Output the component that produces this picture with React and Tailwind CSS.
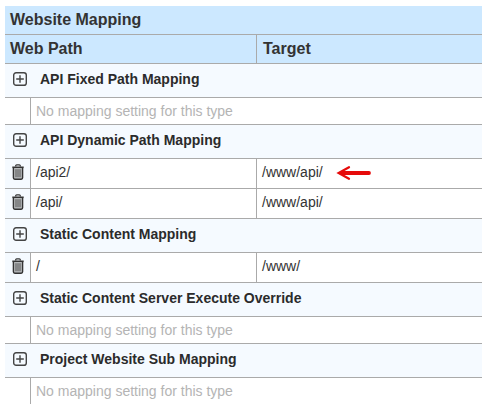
const groups = [
  { title: 'API Fixed Path Mapping', rows: [] },
  {
    title: 'API Dynamic Path Mapping',
    rows: [
      { path: '/api2/', target: '/www/api/', marked: true },
      { path: '/api/', target: '/www/api/' },
    ],
  },
  { title: 'Static Content Mapping', rows: [{ path: '/', target: '/www/' }] },
  { title: 'Static Content Server Execute Override', rows: [] },
  { title: 'Project Website Sub Mapping', rows: [] },
];

function AddIcon() {
  return (
    <svg className="block shrink-0" width="14" height="14" viewBox="0 0 14 14" fill="none" stroke="#444">
      <rect x="0.7" y="0.7" width="12.6" height="12.6" rx="2.4" strokeWidth="1.4" />
      <path d="M7 3.2v7.6M3.2 7h7.6" strokeWidth="1.4" />
    </svg>
  );
}

function TrashIcon() {
  return (
    <svg className="block shrink-0" width="12" height="16" viewBox="0 0 12 16" fill="none" stroke="#333">
      <path d="M3.7 2.6V1.8q0-1 1-1h2.6q1 0 1 1v.8" strokeWidth="1.2" />
      <path d="M0.3 3.3h11.4" strokeWidth="1.6" />
      <path d="M1.4 4v9.8q0 1.4 1.4 1.4h6.4q1.4 0 1.4-1.4V4" fill="#b5b8ba" strokeWidth="1.4" />
      <path d="M4 5.2v8M6 5.2v8M8 5.2v8" stroke="#555" strokeWidth="1" />
    </svg>
  );
}

function Arrow() {
  return (
    <svg className="ml-[13px] block shrink-0" width="36" height="14" viewBox="0 0 36 14" fill="none" stroke="#e60b0b" strokeLinecap="round">
      <path d="M6 7h27" strokeWidth="3.8" />
      <path d="M13 1.2L2.6 7L13 12.8" strokeWidth="2.2" />
    </svg>
  );
}

function Group({ title, rows }) {
  return (
    <>
      <div className="flex h-[34px] items-center border-b border-[#aaa] bg-[#f5faff] pl-2 pb-[3px] font-bold text-[#2b2b2b]">
        <AddIcon />
        <span className="ml-[13px]">{title}</span>
      </div>
      {rows.length === 0 && (
        <div className="flex h-[27px] border-b border-[#aaa] text-[#b4b4b4] last:h-[26px] last:border-b-0">
          <div className="w-[26px] border-r border-[#aaa]" />
          <div className="pl-[5px] pt-[3px]">No mapping setting for this type</div>
        </div>
      )}
      {rows.map((row) => (
        <div key={row.path} className="flex h-[30px] border-b border-[#aaa]">
          <div className="flex w-[26px] justify-center border-r border-[#aaa] bg-[#f5faff] pt-[5px]">
            <TrashIcon />
          </div>
          <div className="w-[226px] border-r border-[#aaa] pl-[5px] pt-[3px]">{row.path}</div>
          <div className="flex pl-[5px] pt-[3px]">
            {row.target}
            {row.marked && <div className="pt-[4px]"><Arrow /></div>}
          </div>
        </div>
      ))}
    </>
  );
}

export default function App() {
  return (
    <div className="h-[410px] w-[487px] overflow-hidden bg-white pl-[5px] pt-[6px] font-['Liberation_Sans',Arial,sans-serif] text-[14px] leading-5 text-[#333]">
      <div className="w-[477px]">
        <div className="h-[29px] border-b border-[#aaa] bg-[#cce8ff] pl-[5px] pt-1 text-base leading-5 font-bold">
          Website Mapping
        </div>
        <div className="flex h-[29px] border-b border-[#aaa] bg-[#cce8ff] text-base leading-5 font-bold">
          <div className="w-[252px] border-r border-[#aaa] pl-[5px] pt-1">Web Path</div>
          <div className="pl-[6px] pt-1">Target</div>
        </div>
        {groups.map((group) => (
          <Group key={group.title} {...group} />
        ))}
      </div>
    </div>
  );
}
